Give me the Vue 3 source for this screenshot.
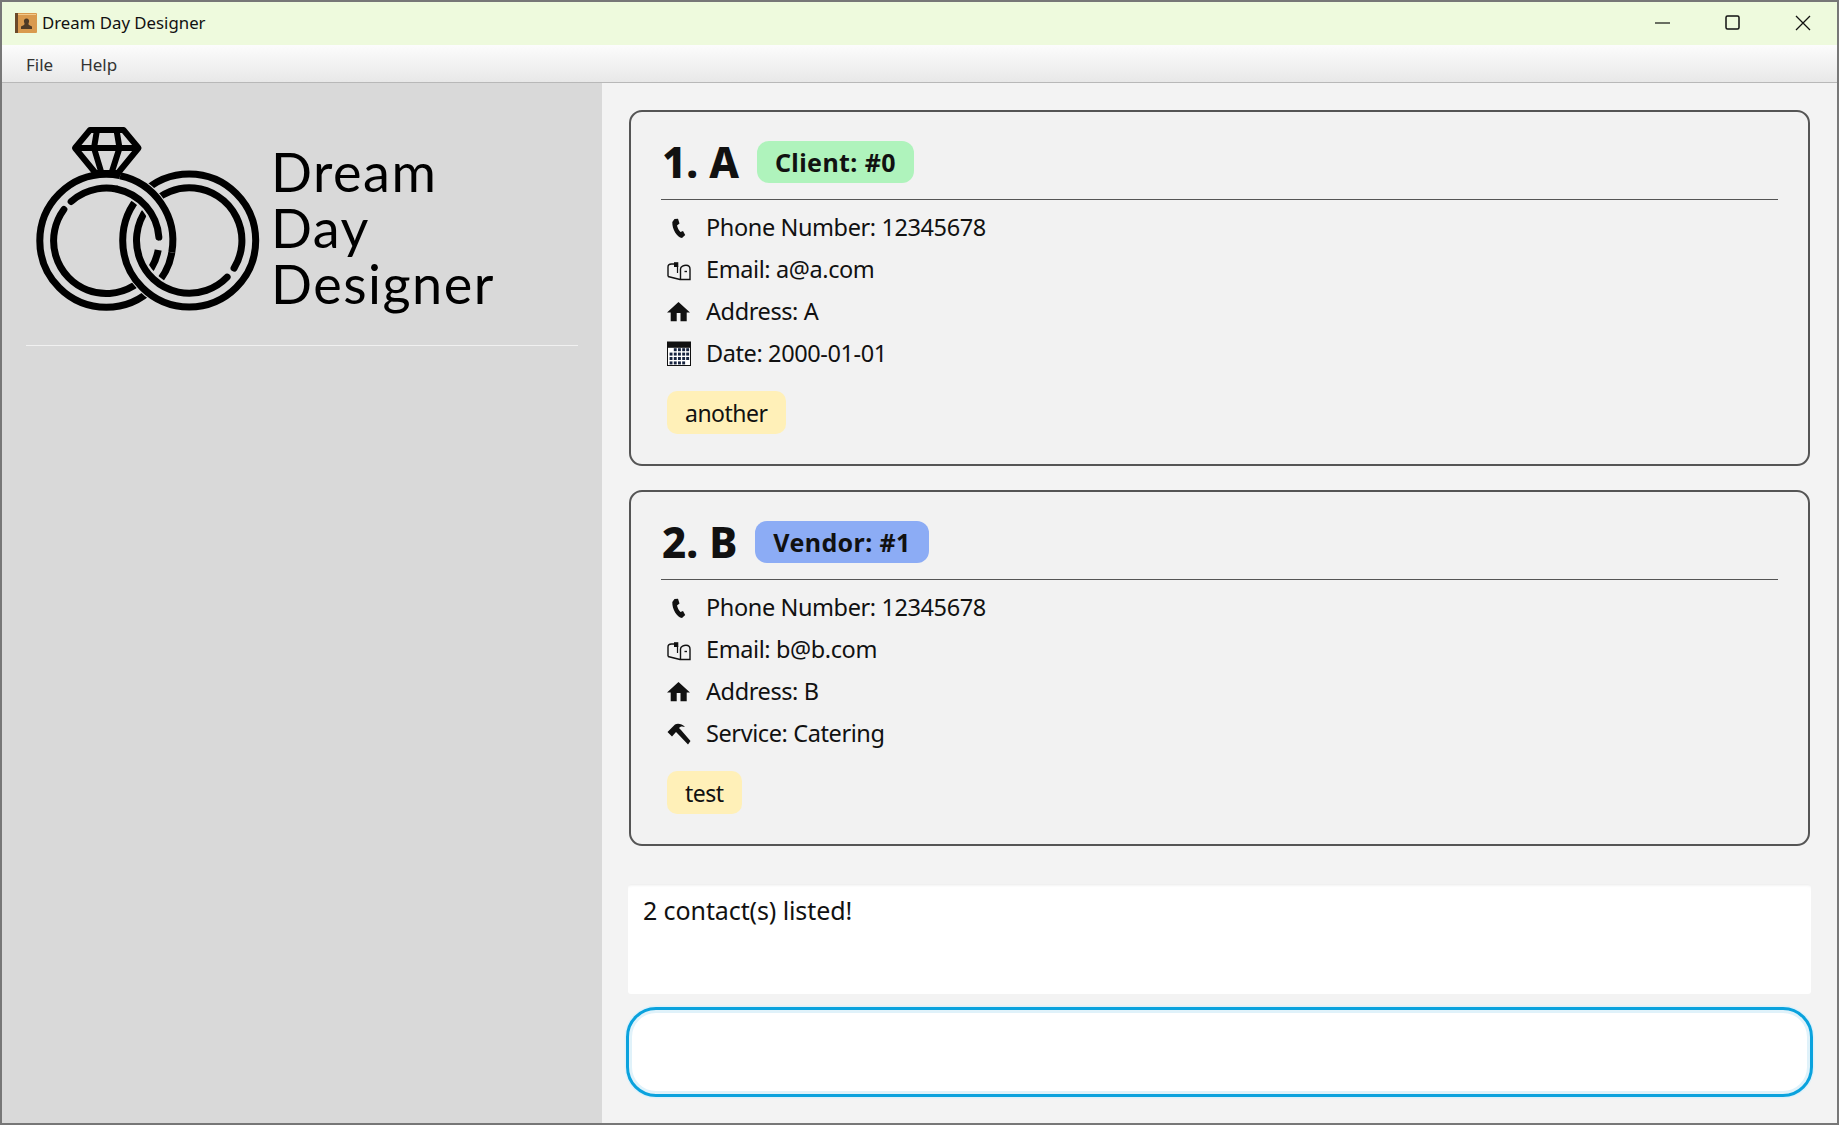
<template>
  <div class="window">
    <div class="titlebar">
      <svg class="app-icon" viewBox="0 0 22 20">
        <rect x="0" y="0" width="22" height="20" rx="1" fill="#d99a4e" />
        <rect x="0" y="0" width="3" height="20" fill="#6b4a2a" />
        <rect x="3" y="1" width="18" height="1" fill="#f2c98c" />
        <path d="M9 12c1-1 .5-1.500 0-3-.4-2 .6-3.500 2.500-3.500S14.400 7 14 9c-.5 1.500-1 2 0 3l3 1.500V16H6v-2.500z" fill="#4f3b26" />
      </svg>
      <span class="app-title">Dream Day Designer</span>
      <div class="win-buttons">
        <svg viewBox="0 0 16 16" class="win-btn"><path d="M0 8h15" stroke="#111" stroke-width="1.200" /></svg>
        <svg viewBox="0 0 16 16" class="win-btn"><rect x="1" y="1" width="13" height="13" rx="1.500" fill="none" stroke="#111" stroke-width="1.500" /></svg>
        <svg viewBox="0 0 16 16" class="win-btn"><path d="M1 1l14 14M15 1L1 15" stroke="#111" stroke-width="1.300" /></svg>
      </div>
    </div>
    <div class="menubar">
      <span>File</span>
      <span>Help</span>
    </div>
    <div class="content">
      <aside class="sidebar">
        <div class="logo">
          <svg class="rings" viewBox="0 0 240 200">
            <g fill="none" stroke="#000" stroke-width="7" stroke-linecap="round">
              <circle :cx="left.x" :cy="left.y" r="66.500" />
              <path v-for="a in leftInner" :key="a" :d="a" />
            </g>
            <g fill="none">
              <circle :cx="right.x" :cy="right.y" r="59" stroke="#d9d9d9" stroke-width="24" />
              <g stroke="#000" stroke-width="7" stroke-linecap="round">
                <circle :cx="right.x" :cy="right.y" r="66.500" />
                <path :d="rightInner" />
              </g>
            </g>
            <g fill="none">
              <path :d="arc(left.x, left.y, 59, -78, 10)" stroke="#d9d9d9" stroke-width="24" />
              <g stroke="#000" stroke-width="7">
                <path :d="arc(left.x, left.y, 66.500, -78, 10)" />
                <path :d="arc(left.x, left.y, 52.700, -78, -4)" stroke-linecap="round" />
              </g>
            </g>
            <path d="M60 10H93.500L108.500 28L88 53H65.500L45 28ZM45 28H108.500M67 10L64 28L71.500 53M86.500 10L89.500 28L81.500 53" fill="none" stroke="#000" stroke-width="6" stroke-linejoin="round" />
          </svg>
          <div class="brand">
            <div>Dream</div>
            <div>Day</div>
            <div>Designer</div>
          </div>
        </div>
        <div class="side-divider"></div>
      </aside>
      <main class="main">
        <section v-for="c in contacts" :key="c.index" class="card">
          <div class="card-head">
            <span class="name">{{ c.index }}. {{ c.name }}</span>
            <span class="badge" :class="c.kind">{{ c.label }}</span>
          </div>
          <div class="rows">
            <div v-for="r in c.rows" :key="r.text" class="row">
              <svg class="icon" viewBox="0 0 25 25" v-html="icons[r.icon]"></svg>
              <span>{{ r.text }}</span>
            </div>
          </div>
          <span class="tag">{{ c.tag }}</span>
        </section>
        <div class="result">2 contact(s) listed!</div>
        <div class="command"></div>
      </main>
    </div>
  </div>
</template>

<script setup>
const left = { x: 76.3, y: 120.8 };
const right = { x: 159.2, y: 120.5 };

const arc = (cx, cy, r, from, to) => {
  const p = (deg) => {
    const t = (deg * Math.PI) / 180;
    return `${(cx + r * Math.cos(t)).toFixed(2)} ${(cy + r * Math.sin(t)).toFixed(2)}`;
  };
  const large = to - from > 180 ? 1 : 0;
  return `M${p(from)}A${r} ${r} 0 ${large} 1 ${p(to)}`;
};

const leftInner = [arc(left.x, left.y, 52.7, -131.8, -4), arc(left.x, left.y, 52.7, 6, 216.4)];
const rightInner = arc(right.x, right.y, 52.7, 44, 391.6);

// calendar cells, first and last one stay white
let calendarCells = '';
[7.2, 11.6, 16, 20.4].forEach((y, row) => {
  [3.6, 7.8, 12, 16.2, 20.2].forEach((x, col) => {
    if ((row === 0 && col === 0) || (row === 3 && col === 4)) return;
    calendarCells += `<rect x="${x}" y="${y}" width="2.900" height="3" fill="#16233f"/>`;
  });
});

const icons = {
  phone: '<path d="M8.500 4 12 3.800l1.500 4.700-2.500 2c.5 2.500 2 5 3.500 6.500l2.500-1 2.200 4-3.200 3C11 22.500 6 14 6.300 7z" fill="#111"/>',
  mail: '<g fill="none" stroke="#111" stroke-width="1.400"><path d="M2 19.500V10c0-2 1.500-3 3.500-3H12"/><path d="M2 19.500l12 3h10V12c0-2.500-2-3.800-4-3.800s-5.500 1.300-5.500 3.800v10.500"/><path d="M18.500 14.500H21"/></g><path d="M8 5.200h4.300V10H8z" fill="#111"/><path d="M11.500 9v7" stroke="#111" stroke-width="1.200"/>',
  home: '<path d="M12.500 3 1 13.500h3.700v8.800h6V14h3.800v8.300h6.200v-8.800H24z" fill="#111"/>',
  date: `<rect x="1" y=".5" width="24" height="24.500" fill="#111"/><rect x="2" y="6.800" width="22" height="17.200" fill="#fff"/>${calendarCells}`,
  tool: '<path d="M1.500 11 9 3.500C12 2 16 3 19 6c-3-1-5-.5-6 1l2 2 9.500 11-2.500 3.500L11.500 12.500 10 11l-4 4.500z" fill="#111"/>',
};

const contacts = [
  {
    index: 1,
    name: 'A',
    kind: 'client',
    label: 'Client: #0',
    tag: 'another',
    rows: [
      { icon: 'phone', text: 'Phone Number: 12345678' },
      { icon: 'mail', text: 'Email: a@a.com' },
      { icon: 'home', text: 'Address: A' },
      { icon: 'date', text: 'Date: 2000-01-01' },
    ],
  },
  {
    index: 2,
    name: 'B',
    kind: 'vendor',
    label: 'Vendor: #1',
    tag: 'test',
    rows: [
      { icon: 'phone', text: 'Phone Number: 12345678' },
      { icon: 'mail', text: 'Email: b@b.com' },
      { icon: 'home', text: 'Address: B' },
      { icon: 'tool', text: 'Service: Catering' },
    ],
  },
];
</script>

<style>
html, body {
  margin: 0;
  background: #f3f3f3;
}
</style>

<style scoped>
.window {
  width: 1839px;
  height: 1125px;
  box-sizing: border-box;
  border: 2px solid #777;
  display: flex;
  flex-direction: column;
  overflow: hidden;
  font-family: "Noto Sans", sans-serif;
  color: #111;
  background: #f3f3f3;
}

.titlebar {
  height: 43px;
  flex: none;
  box-sizing: border-box;
  padding: 0 0 2px 13px;
  display: flex;
  align-items: center;
  background: #eefadd;
}

.app-icon {
  width: 22px;
  height: 20px;
  margin-right: 5px;
}

.app-title {
  font-size: 16.800px;
}

.win-buttons {
  margin-left: auto;
  display: flex;
  gap: 54px;
  margin-right: 26px;
}

.win-btn {
  width: 16px;
  height: 16px;
}

.menubar {
  height: 38px;
  flex: none;
  box-sizing: border-box;
  padding: 2px 0 0 24px;
  display: flex;
  align-items: center;
  gap: 27px;
  font-size: 17px;
  color: #333;
  background: linear-gradient(#fcfcfc, #e8e8e8);
  border-bottom: 1px solid #b8b8b8;
}

.content {
  flex: 1;
  display: flex;
  min-height: 0;
}

.sidebar {
  width: 600px;
  flex: none;
  background: #d9d9d9;
  padding: 37px 24px 0;
  box-sizing: border-box;
}

.logo {
  display: flex;
  height: 225px;
}

.rings {
  width: 240px;
  height: 200px;
  flex: none;
  margin-left: 4px;
}

.brand {
  margin: 24px 0 0 1px;
  font-family: Lato, sans-serif;
  font-size: 54px;
  line-height: 56px;
  letter-spacing: 1.500px;
  color: #000;
}

.side-divider {
  height: 1px;
  background: #f1f1f1;
}

.main {
  flex: 1;
  min-width: 0;
  padding: 27px 27px 0;
  display: flex;
  flex-direction: column;
}

.card {
  height: 356px;
  flex: none;
  box-sizing: border-box;
  border: 2px solid #555;
  border-radius: 13px;
  padding: 0 30px;
  margin-bottom: 24px;
  background: #f2f2f2;
}

.card-head {
  box-sizing: border-box;
  height: 87.500px;
  display: flex;
  align-items: center;
  gap: 18px;
  padding: 14px 0 0 1px;
  border-bottom: 1px solid #555;
}

.name {
  font-size: 42px;
  line-height: 42px;
  font-weight: 800;
}

.badge {
  height: 42px;
  box-sizing: border-box;
  padding: 0 18px;
  border-radius: 12px;
  display: flex;
  align-items: center;
  font-size: 25px;
  letter-spacing: .4px;
  font-weight: 700;
}

.client {
  background: #aff3bc;
}

.vendor {
  background: #8cacf5;
}

.rows {
  margin-top: 6.500px;
  margin-bottom: 17px;
}

.row {
  height: 42px;
  display: flex;
  align-items: center;
  gap: 15px;
  padding-left: 5px;
  font-size: 23.500px;
  letter-spacing: -.4px;
}

.icon {
  width: 25px;
  height: 25px;
  flex: none;
}

.tag {
  display: inline-flex;
  align-items: center;
  height: 43px;
  box-sizing: border-box;
  padding: 0 18px;
  margin-left: 6px;
  border-radius: 10px;
  font-size: 23px;
  letter-spacing: -.5px;
  background: #fff0b8;
}

.result {
  margin: 14px -1px 0;
  height: 110px;
  box-sizing: border-box;
  padding: 9px 15px;
  border-radius: 3px;
  background: #fff;
  font-size: 25px;
  letter-spacing: -.1px;
  box-shadow: inset 0 3px 3px -2px #e8e8e8;
}

.command {
  margin: 13px -3px 0 -3px;
  height: 90px;
  box-sizing: border-box;
  border: 3px solid #0aa2dd;
  border-radius: 30px;
  background: #fff;
  box-shadow: 0 0 0 1.500px #dff1fa, inset 0 0 0 3px #e0f2fa;
}
</style>
